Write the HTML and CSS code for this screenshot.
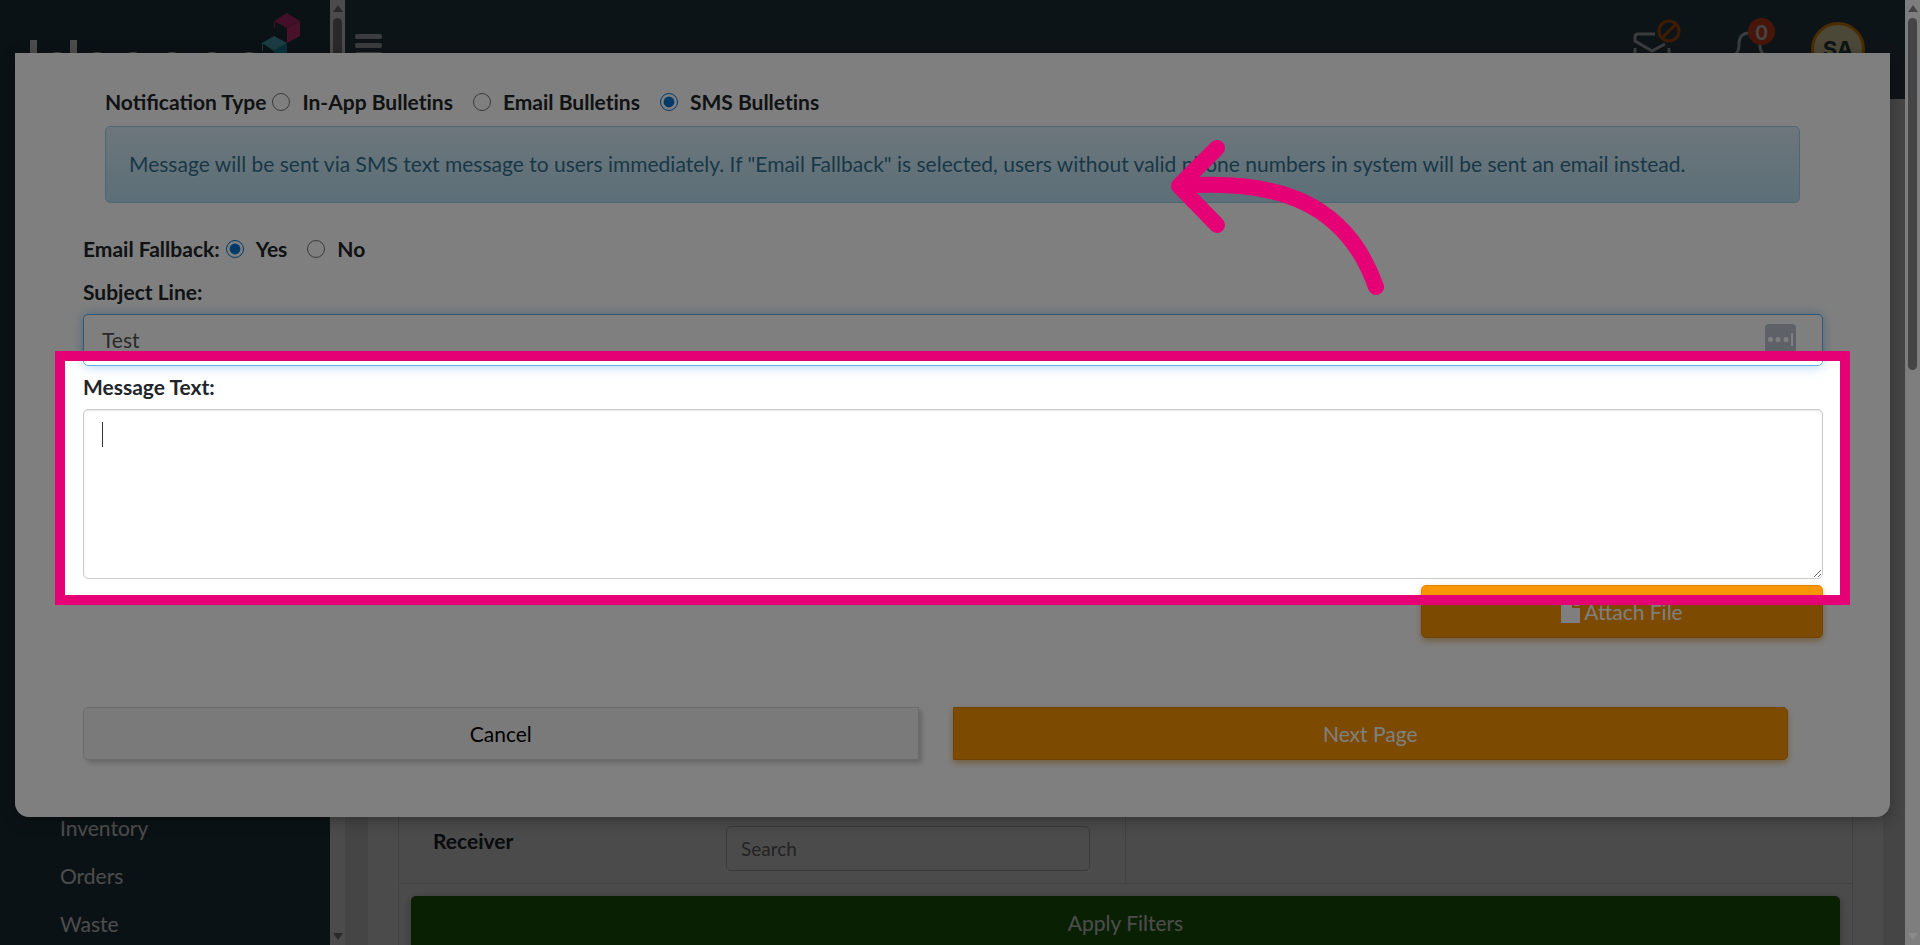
FILE: index.html
```html
<!DOCTYPE html>
<html lang="en">
<head>
    <meta charset="UTF-8">
    <meta name="viewport" content="width=device-width, initial-scale=1.0">
    <title>Bulletins</title>
    <link rel="stylesheet" href="styles.css">
</head>
<body>
    <div class="page">
        <div class="app">
            <aside class="sidebar">
                <svg class="logo" width="330" height="60" viewBox="0 0 330 60" aria-hidden="true">
                    <path fill="#fff" d="M30 40h7v20h-7zM70 40h7v20h-7z"/>
                    <g fill="none" stroke="#fff" stroke-width="6">
                        <circle cx="57" cy="65" r="10"/>
                        <circle cx="97" cy="65" r="10"/>
                        <circle cx="133" cy="65" r="10"/>
                        <circle cx="172" cy="65" r="10"/>
                        <circle cx="212" cy="65" r="10"/>
                        <circle cx="249" cy="65" r="10"/>
                    </g>
                    <path fill="#e33585" d="M287 13l13 8-13 7-13-7z"/>
                    <path fill="#f03c90" d="M287 28l13-7v15l-13 7z"/>
                    <path fill="none" stroke="#e33585" d="M274.500 21v7"/>
                    <path fill="#5ac8dc" d="M274 36l13 7-13 8-12-8z"/>
                    <path fill="#0da6c8" d="M274 51l13-8v15l-13 7z"/>
                    <path fill="none" stroke="#5ac8dc" d="M262.500 43v8"/>
                </svg>
                <nav class="nav">
                    <a href="#">Inventory</a>
                    <a href="#">Orders</a>
                    <a href="#">Waste</a>
                </nav>
            </aside>
            <div class="scrollbar">
                <span class="arrow up"></span>
                <span class="thumb"></span>
                <span class="arrow down"></span>
            </div>
            <main class="main">
                <header class="topbar">
                    <button class="menu" aria-label="Menu"><span></span><span></span><span></span></button>
                    <div class="tools">
                        <svg class="mail" width="50" height="50" viewBox="0 0 50 50" aria-hidden="true">
                            <g fill="none" stroke="#c4cad4" stroke-width="3">
                                <path d="M22 18H5q-3 0-3 3v4l17 10 13-7M2 32v18M36 32v18"/>
                            </g>
                            <g class="ban" fill="none" stroke-width="3">
                                <circle cx="36" cy="15" r="10"/>
                                <path d="M43 8L29 22"/>
                            </g>
                        </svg>
                        <div class="bell">
                            <svg width="40" height="40" viewBox="0 0 40 40" aria-hidden="true">
                                <path fill="none" stroke="#c4cad4" stroke-width="3" d="M3 27q5-3 5-9v-3C8 9 12 5 18 5s11 4 11 10v3q0 6 5 9"/>
                            </svg>
                            <span class="badge">0</span>
                        </div>
                        <div class="avatar">SA</div>
                    </div>
                </header>
                <section class="card">
                    <div class="filters">
                        <div class="filter-row">
                            <div class="filter-cell">
                                <label for="receiver">Receiver</label>
                                <input id="receiver" type="text" placeholder="Search">
                            </div>
                            <div class="filter-cell"></div>
                        </div>
                        <button class="apply">Apply Filters</button>
                    </div>
                </section>
            </main>
        </div>
        <div class="backdrop"></div>

        <form class="modal">
            <fieldset class="radios type">
                <legend>Notification Type</legend>
                <label><input type="radio" name="type"> In-App Bulletins</label>
                <label><input type="radio" name="type"> Email Bulletins</label>
                <label><input type="radio" name="type" checked> SMS Bulletins</label>
            </fieldset>
            <div class="info">Message will be sent via SMS text message to users immediately. If "Email Fallback" is selected, users without valid phone numbers in system will be sent an email instead.</div>
            <fieldset class="radios">
                <legend>Email Fallback:</legend>
                <label><input type="radio" name="fallback" checked> Yes</label>
                <label><input type="radio" name="fallback"> No</label>
            </fieldset>
            <label class="field-label" for="subject">Subject Line:</label>
            <div class="subject">
                <input id="subject" type="text" value="Test">
                <svg width="31" height="31" viewBox="0 0 31 31" aria-hidden="true">
                    <rect width="31" height="31" rx="4" fill="#bcc3d0"/>
                    <g fill="#fff">
                        <circle cx="5.500" cy="15.500" r="2.500"/>
                        <circle cx="13" cy="15.500" r="2.500"/>
                        <circle cx="21" cy="15.500" r="2.500"/>
                        <path d="M26 9h2v13h-2z"/>
                    </g>
                </svg>
            </div>
            <label class="field-label" for="message">Message Text:</label>
            <div class="message">
                <textarea id="message"></textarea>
                <span class="caret"></span>
            </div>
            <button type="button" class="btn orange attach">
                <svg width="19" height="23" viewBox="0 0 19 23" aria-hidden="true">
                    <path fill="#fff" d="M0 1h11v7h8v15H0zM13 1l6 5h-6z"/>
                </svg>Attach File
            </button>
            <div class="actions">
                <button type="button" class="btn cancel">Cancel</button>
                <button type="button" class="btn orange next">Next Page</button>
            </div>

            <div class="spotlight"></div>
            <svg class="pointer" width="216" height="158" viewBox="0 0 216 158" aria-hidden="true">
                <g fill="none" stroke="#e50075" stroke-width="16" stroke-linecap="round" stroke-linejoin="round">
                    <path d="M47 10L9 48l38 39"/>
                    <path d="M12 48C105 41 176 63 206 149"/>
                </g>
            </svg>
        </form>
    </div>
    <div class="scrollbar window-bar">
        <span class="arrow up"></span>
        <span class="thumb"></span>
        <span class="arrow down"></span>
    </div>
</body>
</html>
```

FILE: styles.css
```css
* {
    box-sizing: border-box;
}
body {
    margin: 0;
    height: 100vh;
    display: flex;
    overflow: hidden;
    font-family: Lato, sans-serif;
    font-size: 21px;
    line-height: 30px;
    color: #212529;
}
button, input, textarea {
    font: inherit;
}
.page {
    position: relative;
    flex: 1;
    min-width: 0;
}
.app {
    display: flex;
    height: 100vh;
    overflow: hidden;
}

/* sidebar */
.sidebar {
    width: 330px;
    display: flex;
    flex-direction: column;
    justify-content: space-between;
    background: #263c46;
}
.nav {
    display: flex;
    flex-direction: column;
    padding-left: 60px;
    margin-bottom: -3px;
}
.nav a {
    line-height: 48px;
    color: #fff;
    text-decoration: none;
}

/* scrollbars */
.scrollbar {
    width: 15px;
    display: flex;
    flex-direction: column;
    align-items: center;
    padding: 5px 0;
    gap: 6px;
    background: #fcfcfc;
}
.thumb {
    width: 9px;
    height: 352px;
    border-radius: 5px;
    background: #8b8b8b;
}
.arrow {
    border: 5px solid transparent;
    border-top-width: 0;
    border-bottom: 7px solid #8b8b8b;
}
.arrow.down {
    margin-top: auto;
    transform: rotate(180deg);
}

/* main */
.main {
    flex: 1;
    min-width: 0;
    display: flex;
    flex-direction: column;
    background: #e6e6e6;
}
.topbar {
    height: 99px;
    display: flex;
    justify-content: space-between;
    padding: 0 40px 0 10px;
    background: #2e434f;
}
.menu {
    display: flex;
    flex-direction: column;
    gap: 4px;
    padding: 34px 0 0;
    border: 0;
    background: none;
}
.menu span {
    width: 27px;
    height: 5px;
    border-radius: 2px;
    background: #c4cad4;
}
.tools {
    display: flex;
    gap: 48px;
    padding-top: 16px;
}
.ban {
    stroke: #d05c08;
}
.bell {
    position: relative;
    margin-right: -8px;
    padding-top: 12px;
}
.badge {
    position: absolute;
    top: 2px;
    right: -4px;
    width: 27px;
    height: 27px;
    border-radius: 50%;
    background: #f04a1c;
    color: #e8ecf5;
    font-weight: bold;
    line-height: 27px;
    text-align: center;
}
.avatar {
    width: 54px;
    height: 54px;
    margin-top: 6px;
    border: 3px solid #f79400;
    border-radius: 50%;
    background: #fff0b8;
    color: #2e434f;
    font: bold 22px/48px Inter, sans-serif;
    text-align: center;
}
.card {
    flex: 1;
    display: flex;
    margin: 0 22px 0 23px;
    padding: 0 30px;
    background: #fcfcfc;
}
.filters {
    flex: 1;
    display: flex;
    flex-direction: column;
    justify-content: flex-end;
    border: 1px solid #dcdcdc;
    border-width: 0 1px;
}
.filter-row {
    display: flex;
    border-bottom: 1px solid #dcdcdc;
}
.filter-cell {
    flex: 1;
    display: flex;
    padding: 12px 35px 12px 34px;
}
.filter-cell:first-child {
    border-right: 1px solid #dcdcdc;
}
.filter-cell label {
    flex: 1;
    font-weight: bold;
}
.filter-cell input {
    width: 364px;
    height: 45px;
    padding: 0 14px;
    border: 1px solid #c4c4c4;
    border-radius: 5px;
    background: transparent;
    font-size: 19px;
}
.apply {
    height: 53px;
    margin: 12px 12px -4px;
    border: 0;
    border-radius: 5px;
    background: #216b0d;
    color: #fff;
    box-shadow: 0 2px 8px rgba(0, 0, 0, 0.3);
}

/* modal */
.backdrop {
    position: absolute;
    inset: 0;
    background: rgba(0, 0, 0, 0.4);
}
.modal {
    position: absolute;
    top: 53px;
    left: 15px;
    right: 15px;
    display: flex;
    flex-direction: column;
    padding: 34px 67px 57px 68px;
    border-radius: 0 0 14px 14px;
    background: #fff;
    box-shadow: 0 4px 16px rgba(0, 0, 0, 0.3);
}
.radios {
    display: flex;
    align-items: center;
    margin: 0;
    padding: 0;
    border: 0;
    font-weight: bold;
}
.radios legend {
    float: left;
    padding: 0;
    margin-right: 6px;
}
.radios label {
    display: flex;
    align-items: center;
    gap: 12px;
    margin-right: 20px;
    font-variant-ligatures: no-common-ligatures;
}
.radios input {
    width: 18px;
    height: 18px;
    margin: 0;
    accent-color: #0074d0;
}
.type {
    padding-left: 22px;
}
.info {
    margin: 9px 23px 31px 22px;
    padding: 22px 23px 23px;
    border: 1px solid #9acfea;
    border-radius: 5px;
    background: linear-gradient(#d9edf7, #b9def0);
    color: #31708f;
    text-shadow: 0 1px 0 rgba(255, 255, 255, 0.2);
}
.field-label {
    font-weight: bold;
}
.radios + .field-label {
    margin-top: 13px;
}
.subject {
    position: relative;
    display: flex;
    margin: 7px 0 6px;
}
.subject input,
.message textarea {
    flex: 1;
    padding: 10px 18px;
    border: 1px solid #ccc;
    border-radius: 5px;
    outline: 0;
    color: #555;
    box-shadow: inset 0 1px 2px rgba(0, 0, 0, 0.1);
}
.subject input {
    border-color: #66afe9;
    box-shadow: 0 0 12px rgba(102, 175, 233, 0.6);
}
.subject svg {
    position: absolute;
    top: 10px;
    right: 27px;
}
.message {
    position: relative;
    display: flex;
    margin: 7px 0 6px;
}
.message textarea {
    height: 170px;
}
.caret {
    position: absolute;
    top: 13px;
    left: 19px;
    width: 1px;
    height: 25px;
    background: #333;
}
.btn {
    height: 53px;
    border: 1px solid #d8d8d8;
    border-radius: 5px;
    background: #f4f4f4;
    color: #000;
    box-shadow: 3px 3px 5px rgba(0, 0, 0, 0.2);
}
.btn.orange {
    border-color: #e08600;
    background: #f99500;
    color: #fff;
    box-shadow: 0 3px 6px rgba(200, 120, 0, 0.5);
}
.attach {
    display: flex;
    align-items: center;
    justify-content: center;
    gap: 4px;
    align-self: flex-end;
    width: 402px;
}
.actions {
    display: flex;
    gap: 34px;
    margin: 69px 35px 0 0;
}
.actions .btn {
    flex: 1;
}
.btn.cancel {
    border-radius: 5px 0 0 5px;
}
.btn.next {
    border-radius: 0 5px 5px 0;
}

/* tour highlight */
.spotlight {
    position: absolute;
    top: 298px;
    left: 40px;
    right: 40px;
    height: 254px;
    border: 10px solid #e50075;
    box-shadow: 0 0 0 3000px rgba(0, 0, 0, 0.5);
    pointer-events: none;
}
.pointer {
    position: absolute;
    top: 85px;
    left: 1155px;
}
```
